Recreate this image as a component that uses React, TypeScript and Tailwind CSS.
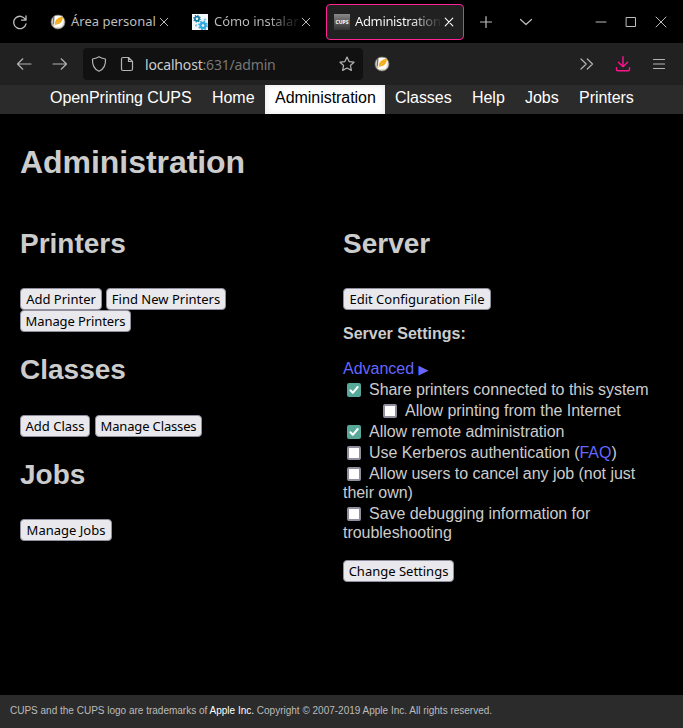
import type { ReactNode } from "react";

const ui = "font-['Noto_Sans',sans-serif]";

function Button({ children, className }: { children: ReactNode; className: string }) {
  return (
    <button
      className={`${ui} flex h-[22px] shrink-0 items-center justify-center whitespace-nowrap rounded-[4px] border border-[#8f8f9d] bg-[#e9e9ed] text-[13px] leading-none text-black ${className}`}
    >
      {children}
    </button>
  );
}

function Check({ checked = false }: { checked?: boolean }) {
  return checked ? (
    <span className="mr-2 ml-1 inline-block size-[14px] rounded-[2px] bg-[#57a898] align-[-2px]">
      <svg viewBox="0 0 14 14" className="block size-[14px]" fill="none" stroke="#fff" strokeWidth="2" strokeLinecap="round" strokeLinejoin="round">
        <path d="M3.4 7.3 5.8 9.8 10.7 4" />
      </svg>
    </span>
  ) : (
    <span className="mr-2 ml-1 inline-block size-[14px] rounded-[2px] border-2 border-[#8f8f9d] bg-white align-[-2px]" />
  );
}

function Feather() {
  return (
    <svg viewBox="0 0 16 16" className="size-4 shrink-0">
      <circle cx="8" cy="8" r="7" fill="#dedbd2" />
      <path d="M3 3.5 5.5 1.5 4.4 9 2.6 11.5Z" fill="#77716a" />
      <path d="M4.5 1.8h7.8c1.8 2 1.5 7-.8 10.8L4 13Z" fill="#fff" />
      <path d="M4.9 10.8C4.5 6.5 7.5 3.4 12.7 2.5c.4 4.7-2 7.8-7.8 8.3Z" fill="#f5ae18" />
      <path d="M4.2 12 9 7" stroke="#e9c05b" strokeWidth=".8" />
      <circle cx="8" cy="8" r="7" fill="none" stroke="#777269" strokeWidth=".7" />
    </svg>
  );
}

function Gears() {
  return (
    <svg viewBox="0 0 16 16" className="size-4 shrink-0" fill="none">
      <path fill="#f4f8fa" d="M0 0h16v16H0z" />
      <circle cx="5" cy="4.7" r="2.1" stroke="#137aa0" strokeWidth="1.7" />
      <circle cx="5" cy="4.7" r="3.2" stroke="#137aa0" strokeWidth="1.2" strokeDasharray="1.2 1.3" />
      <circle cx="11" cy="11.5" r="2.5" stroke="#35a9df" strokeWidth="2.4" />
      <circle cx="11" cy="11.5" r="4.2" stroke="#35a9df" strokeWidth="1.5" strokeDasharray="1.7 1.6" />
      <circle cx="13" cy="5.5" r=".7" stroke="#35a9df" strokeWidth=".8" />
      <circle cx="4.2" cy="11.4" r=".7" stroke="#35a9df" strokeWidth=".8" />
    </svg>
  );
}

function Icon({ d, className = "", width = 1.2 }: { d: string; className?: string; width?: number }) {
  return (
    <svg viewBox="0 0 16 16" className={`size-4 shrink-0 ${className}`} fill="none" stroke="currentColor" strokeWidth={width} strokeLinecap="round" strokeLinejoin="round">
      <path d={d} />
    </svg>
  );
}

const cross = "M4.2 4.2 11.8 11.8M11.8 4.2 4.2 11.8";

function TabBar() {
  return (
    <div className={`${ui} flex h-[43px] items-center text-[13px] text-[#bdbdbd]`}>
      <Icon className="ml-3 mt-px" width={1.3} d="M14 6.2V1.8M14 6.2H9.5M13.4 5.5A6.2 6.2 0 1 0 14 9.8" />
      <div className="ml-[22px]"><Feather /></div>
      <span className="ml-[5px] w-[85px] whitespace-nowrap">Área personal</span>
      <Icon width={1} d={cross} />
      <div className="ml-5"><Gears /></div>
      <span className="ml-1.5 w-[84px] whitespace-nowrap bg-[linear-gradient(90deg,#bdbdbd_65%,#222_95%)] bg-clip-text tracking-[-0.05px] text-transparent">Cómo instalar</span>
      <Icon width={1} d={cross} />
      <div className="ml-3 mt-px flex h-9 w-[138px] items-center rounded-[4px] border border-[#ff2396] bg-[#212121] pl-[7px] text-white">
        <span className="flex size-4 shrink-0 items-center justify-center bg-gradient-to-b from-[#888] to-[#333] text-[5px] font-bold leading-none">CUPS</span>
        <span className="ml-[5px] w-[86px] whitespace-nowrap bg-[linear-gradient(90deg,#fff_65%,#333_98%)] bg-clip-text tracking-[-0.35px] text-transparent">Administration</span>
        <Icon width={1.1} d={cross} />
      </div>
      <Icon className="ml-[14px] mt-px" d="M8 2.5v11M2.5 8h11" />
      <Icon className="ml-6" d="m2.5 5.5 5.5 5 5.5-5" />
      <Icon className="ml-[59px]" width={1} d="M3 8h10" />
      <Icon className="ml-[14px]" width={1} d="M3.5 3.5h9v9h-9z" />
      <Icon className="ml-[14px]" width={1} d="m3 3 10 10M13 3 3 13" />
    </div>
  );
}

function AddressBar() {
  return (
    <div className="flex h-[42px] items-center bg-[#212121] text-[#b3b3b3]">
      <Icon className="ml-4" d="M15 8H1.5M6.8 2.8 1.5 8l5.3 5.2" />
      <Icon className="ml-5" d="M1 8h13.5M9.2 2.8 14.5 8l-5.3 5.2" />
      <div className="ml-[15px] flex h-8 w-[280px] items-center rounded-[4px] bg-[#111]">
        <Icon className="ml-2" d="M8 .8c2 1.4 4.3 1.8 6.5 2.2.4 6-1.2 10-6.5 12.3C2.7 13 1.1 9 1.5 3 3.7 2.6 6 2.2 8 .8Z" />
        <Icon className="ml-3" d="M4 1.5h5.5l4 4V13c0 1-.5 1.5-1.5 1.5H4c-1 0-1.5-.5-1.5-1.5V3c0-1 .5-1.5 1.5-1.5ZM9.5 1.5v4h4" />
        <span className={`${ui} ml-[10px] mt-px w-[190px] whitespace-nowrap text-[14px] tracking-[-0.18px] text-[#777]`}>
          <span className="text-[#ccc]">localhost</span>:631/admin
        </span>
        <Icon className="ml-1" d="m8 1.1 2.1 4.5 4.9.6-3.6 3.3 1 4.9L8 12l-4.4 2.4 1-4.9L1 6.2l4.9-.6Z" />
      </div>
      <div className="ml-[11px]"><Feather /></div>
      <Icon className="ml-[189px]" d="m2 3 5.2 5L2 13M8.3 3l5.2 5-5.2 5" />
      <Icon className="ml-5 text-[#ff138f]" width={1.4} d="M8 .8v10M3.4 6.3 8 10.8l4.6-4.5M1.5 11.8v1.7c0 .8.5 1.3 1.3 1.3h10.4c.8 0 1.3-.5 1.3-1.3v-1.7" />
      <Icon className="ml-5" d="M2.5 3.5h11M2.5 8h11M2.5 12.5h11" />
    </div>
  );
}

export default function App() {
  return (
    <div className="flex h-[728px] w-[683px] flex-col overflow-hidden bg-black font-['Liberation_Sans',sans-serif] text-base text-[#ccc]">
      <TabBar />
      <AddressBar />
      <nav className="flex h-[29px] items-start bg-[#2b2b2b] pl-10 leading-[25px] tracking-[-0.04px] text-white">
        <a className="w-[162px] px-[10px] whitespace-nowrap">OpenPrinting CUPS</a>
        <a className="w-[63px] px-[10px]">Home</a>
        <a className="h-full w-[120px] bg-white px-[10px] text-black shadow-[inset_0_0_6px_#e4e4e4]">Administration</a>
        <a className="w-[77px] px-[10px]">Classes</a>
        <a className="w-[53px] px-[10px]">Help</a>
        <a className="w-[54px] px-[10px]">Jobs</a>
        <a className="px-[10px]">Printers</a>
      </nav>
      <main className="h-[581px] shrink-0 px-5 pt-[29px]">
        <h1 className="text-[32px] font-bold leading-[38px] tracking-[-0.05px]">Administration</h1>
        <div className="mt-[45px] flex">
          <section className="w-[323px]">
            <h2 className="text-[28px] font-bold leading-[36px]">Printers</h2>
            <div className="mt-[26px] flex gap-1">
              <Button className="w-[82px]">Add Printer</Button>
              <Button className="w-[120px]">Find New Printers</Button>
            </div>
            <Button className="w-[111px] tracking-[-0.1px]">Manage Printers</Button>
            <h2 className="mt-5 text-[28px] font-bold leading-[36px]">Classes</h2>
            <div className="mt-[27px] flex gap-[5px]">
              <Button className="w-[70px]">Add Class</Button>
              <Button className="w-[107px] tracking-[-0.15px]">Manage Classes</Button>
            </div>
            <h2 className="mt-5 text-[28px] font-bold leading-[36px]">Jobs</h2>
            <Button className="mt-[26px] w-[92px]">Manage Jobs</Button>
          </section>
          <section className="w-[310px]">
            <h2 className="text-[28px] font-bold leading-[36px]">Server</h2>
            <Button className="mt-[26px] w-[148px]">Edit Configuration File</Button>
            <p className="mt-[14px] font-bold leading-[19px]">Server Settings:</p>
            <p className="mt-4 leading-[19px] text-[#6666ff]">Advanced <span className="font-['DejaVu_Sans',sans-serif] text-[13px] leading-none">▶</span></p>
            <div className="mt-px whitespace-nowrap leading-[21px] tracking-[-0.04px]">
              <p className="h-[21px]"><Check checked />Share printers connected to this system</p>
              <p className="h-[21px] pl-9"><Check />Allow printing from the Internet</p>
              <p className="h-[21px]"><Check checked />Allow remote administration</p>
              <p className="h-[21px]"><Check />Use Kerberos authentication (<a className="text-[#6666ff]">FAQ</a>)</p>
              <p className="h-[21px]"><Check />Allow users to cancel any job (not just</p>
              <p className="h-[19px] leading-[17px]">their own)</p>
              <p className="h-[21px]"><Check />Save debugging information for</p>
              <p className="h-[19px] leading-[17px]">troubleshooting</p>
            </div>
            <Button className="mt-[17px] w-[111px]">Change Settings</Button>
          </section>
        </div>
      </main>
      <footer className="h-[33px] shrink-0 bg-[#2b2b2b] pl-[10px] text-[10px] leading-[31px] text-[#bbb]">
        CUPS and the CUPS logo are trademarks of <a className="text-white">Apple Inc.</a> Copyright © 2007-2019 Apple Inc. All rights reserved.
      </footer>
    </div>
  );
}
